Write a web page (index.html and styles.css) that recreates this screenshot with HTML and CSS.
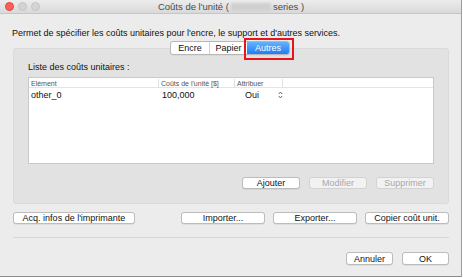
FILE: index.html
```html
<!DOCTYPE html>
<html lang="fr">
<head>
<meta charset="utf-8">
<link rel="stylesheet" href="styles.css">
</head>
<body>
<div class="window">
  <div class="titlebar">
    <div class="lights">
      <span class="light red"></span>
      <span class="light"></span>
      <span class="light"></span>
    </div>
    <div class="title">Coûts de l'unité (<span class="blur"></span> series )</div>
  </div>
  <div class="content">
    <p class="desc">Permet de spécifier les coûts unitaires pour l'encre, le support et d'autres services.</p>
    <div class="tabs">
      <div class="segmented">
        <span class="seg s1">Encre</span>
        <span class="seg s2">Papier</span>
        <span class="seg s3 active">Autres<span class="highlight"></span></span>
      </div>
    </div>
    <div class="panel">
      <div class="label">Liste des coûts unitaires :</div>
      <div class="table">
        <div class="row head">
          <span class="c1">Elément</span>
          <span class="c2">Coûts de l'unité [$]</span>
          <span class="c3">Attribuer</span>
          <span class="c4"></span>
        </div>
        <div class="row body">
          <span class="c1">other_0</span>
          <span class="c2">100,000</span>
          <span class="c3"><span class="oui">Oui</span>
            <svg class="stepper" width="5" height="8" viewBox="0 0 5 8"><path d="M0.8 3 L2.5 1 L4.2 3 M0.8 5 L2.5 7 L4.2 5" fill="none" stroke="#555" stroke-width="0.9"/></svg>
          </span>
          <span class="c4"></span>
        </div>
      </div>
      <div class="panel-buttons">
        <button class="btn w58">Ajouter</button>
        <button class="btn w58 disabled">Modifier</button>
        <button class="btn w58 disabled">Supprimer</button>
      </div>
    </div>
    <div class="actions">
      <button class="btn acq">Acq. infos de l'imprimante</button>
      <div class="actions-right">
        <button class="btn w84">Importer...</button>
        <button class="btn w84">Exporter...</button>
        <button class="btn w84">Copier coût unit.</button>
      </div>
    </div>
    <div class="sep"></div>
    <div class="footer">
      <button class="btn w47">Annuler</button>
      <button class="btn w47">OK</button>
    </div>
  </div>
</div>
</body>
</html>
```

FILE: styles.css
```css
* { box-sizing: border-box; }
html, body { margin: 0; padding: 0; }
body {
  width: 463px;
  height: 278px;
  background: #ffffff;
  font-family: "Liberation Sans", Arial, sans-serif;
  color: #1a1a1a;
  overflow: hidden;
}
.window {
  width: 462px;
  height: 277px;
  background: #ececec;
  border-right: 1px solid #9c9c9c;
  border-bottom: 1px solid #8c8c8c;
  display: flex;
  flex-direction: column;
}
.titlebar {
  height: 14px;
  background: linear-gradient(#ececec, #d9d9d9);
  border-bottom: 1px solid #c6c6c6;
  display: flex;
  align-items: center;
  position: relative;
}
.lights {
  display: flex;
  gap: 4px;
  padding-left: 5px;
}
.light {
  width: 9px;
  height: 9px;
  border-radius: 50%;
  background: #d4d4d4;
  border: 0.5px solid #c4c4c4;
}
.light.red { background: #fc5f57; border-color: #e0443e; }
.title {
  position: absolute;
  left: 0; right: 0; top: 0; bottom: 0;
  display: flex;
  align-items: center;
  justify-content: center;
  font-size: 9.5px;
  color: #4a4a4a;
  padding-left: 1px;
}
.blur {
  display: inline-block;
  width: 40px;
  height: 8px;
  margin: 0 2px 0 2px;
  background: #d0d0d0;
  filter: blur(1.2px);
}
.content {
  flex: 1;
  padding: 0 12px 0 13px;
  display: flex;
  flex-direction: column;
}
.desc {
  margin: 13px 0 0 -1px;
  font-size: 9px;
  line-height: 12px;
  color: #111;
}
.tabs {
  display: flex;
  justify-content: center;
  margin-top: 2px;
  margin-bottom: -7px;
  position: relative;
  z-index: 2;
  padding-right: 2px;
}
.segmented {
  display: flex;
  height: 14px;
  border: 1px solid #b7b7b7;
  border-radius: 3px;
  background: #fff;
  box-shadow: 0 0.5px 0.5px rgba(0,0,0,0.08);
}
.seg {
  font-size: 9px;
  line-height: 12px;
  text-align: center;
  color: #111;
  border-left: 1px solid #d4d4d4;
  position: relative;
}
.s1 { width: 38px; border-left: 0; }
.s2 { width: 38px; }
.s3 { width: 42px; }
.seg.active {
  background: linear-gradient(#69b1fa, #1a7ff9);
  color: #fff;
  border-left: 0;
  border-radius: 0 2px 2px 0;
}
.highlight {
  position: absolute;
  left: -3px; right: -5px; top: -4px; bottom: -6px;
  border: 2px solid #e8141b;
}
.panel {
  height: 156px;
  background: #e2e2e2;
  border: 1px solid #dadada;
  border-radius: 3px;
  padding: 12px 14px 0 14px;
  display: flex;
  flex-direction: column;
}
.label {
  font-size: 9px;
  line-height: 12px;
  color: #111;
}
.table {
  margin-top: 4px;
  height: 87px;
  background: #fff;
  border: 1px solid #c9c9c9;
}
.row {
  display: grid;
  grid-template-columns: 130px 76px 48px 1fr;
}
.row.head {
  height: 10px;
  border-bottom: 1px solid #e4e4e4;
  font-size: 7px;
  line-height: 9px;
  color: #555;
}
.row.head span { padding-left: 2px; border-right: 1px solid #e0e0e0; height: 8px; margin-top: 0.5px; }
.row.head .c4 { border-right: 0; }
.row.body {
  height: 14px;
  font-size: 9px;
  line-height: 14px;
  color: #111;
}
.row.body .c1 { padding-left: 2px; }
.row.body .c2 { padding-left: 3px; }
.row.body .c3 { padding-left: 10px; display: flex; align-items: center; }
.oui { width: 34px; }
.stepper { display: block; }
.panel-buttons {
  display: flex;
  justify-content: flex-end;
  gap: 9px;
  margin-top: 13px;
}
.btn {
  height: 12px;
  padding: 0;
  font-family: "Liberation Sans", Arial, sans-serif;
  font-size: 9px;
  line-height: 10px;
  color: #111;
  background: #fff;
  border: 1px solid #bcbcbc;
  border-radius: 3px;
  box-shadow: 0 0.5px 0.5px rgba(0,0,0,0.12);
}
.btn.disabled {
  color: #a8a8a8;
  background: #f2f2f2;
  border-color: #d2d2d2;
  box-shadow: none;
}
.w58 { width: 58px; }
.w84 { width: 84px; }
.w47 { width: 47px; height: 13px; }
.acq { width: 122px; }
.actions {
  display: flex;
  justify-content: space-between;
  margin-top: 8px;
}
.actions-right { display: flex; gap: 8px; }
.sep {
  height: 1px;
  background: #d6d6d6;
  margin-top: 13px;
}
.footer {
  display: flex;
  justify-content: flex-end;
  gap: 9px;
  margin-top: 14px;
}
```
